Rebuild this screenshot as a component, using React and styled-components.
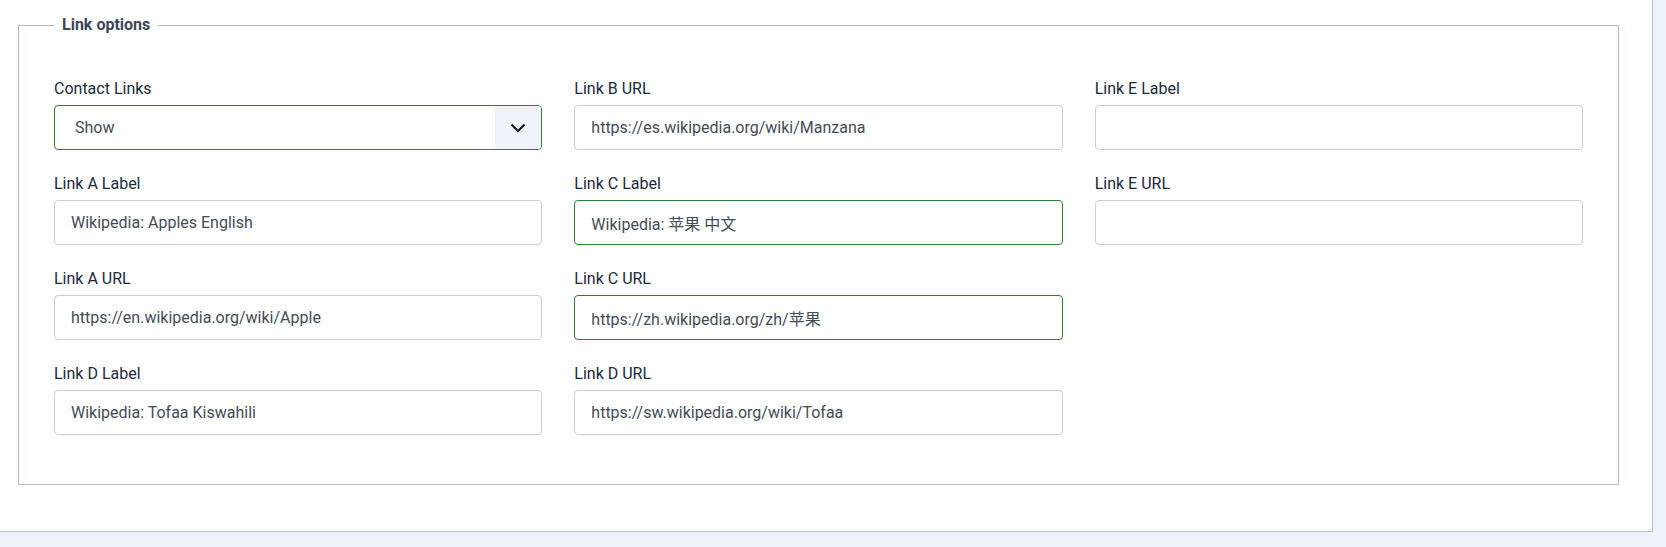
import React from "react";
import styled, { createGlobalStyle } from "styled-components";

const Global = createGlobalStyle`
  html, body {
    margin: 0;
    padding: 0;
    background: #eef2f9;
    font-family: Roboto, "Noto Sans CJK SC", sans-serif;
  }
  * { box-sizing: border-box; }
`;

const Panel = styled.div`
  width: 1653px;
  background: #fff;
  border-right: 1px solid #b4c0cc;
  border-bottom: 1px solid #b4c0cc;
  padding: 13px 33px 46px 18px;
`;

const Fieldset = styled.fieldset`
  margin: 0;
  border: 1px solid #b2bfcc;
  padding: 40px 35px 49px 35px;
  min-width: 0;
`;

const Legend = styled.legend`
  padding: 0 8px;
  font-size: 16px;
  font-weight: 700;
  line-height: 24px;
  color: #3b4654;
`;

const Grid = styled.div`
  display: grid;
  grid-template-columns: repeat(3, 1fr);
  column-gap: 32px;
  align-items: start;
`;

const Column = styled.div`
  display: flex;
  flex-direction: column;
  gap: 22px;
`;

const Field = styled.div`
  display: flex;
  flex-direction: column;
`;

const Label = styled.label`
  font-size: 16px;
  line-height: 24px;
  color: #1c2a3a;
  margin-bottom: 4px;
`;

const Input = styled.input`
  height: 45px;
  width: 100%;
  padding: 0 16px;
  font-family: Roboto, "Noto Sans CJK SC", sans-serif;
  font-size: 16px;
  color: #434c57;
  background: #fff;
  border: 1px solid ${(p) => (p.$valid ? "#2f7d32" : "#cbced2")};
  border-radius: 4px;
  outline: none;
`;

const SelectBox = styled.div`
  height: 45px;
  display: flex;
  align-items: center;
  border: 1px solid #2f7d32;
  border-radius: 4px;
  overflow: hidden;
`;

const SelectValue = styled.div`
  flex: 1;
  padding-left: 20px;
  font-size: 16px;
  color: #434c57;
`;

const Arrow = styled.div`
  width: 46px;
  height: 100%;
  background: #eef3fa;
  display: flex;
  align-items: center;
  justify-content: center;
`;

const fields = [
  [
    { label: "Link A Label", value: "Wikipedia: Apples English" },
    { label: "Link A URL", value: "https://en.wikipedia.org/wiki/Apple" },
    { label: "Link D Label", value: "Wikipedia: Tofaa Kiswahili" },
  ],
  [
    { label: "Link B URL", value: "https://es.wikipedia.org/wiki/Manzana" },
    { label: "Link C Label", value: "Wikipedia: 苹果 中文", valid: true },
    { label: "Link C URL", value: "https://zh.wikipedia.org/zh/苹果", valid: true },
    { label: "Link D URL", value: "https://sw.wikipedia.org/wiki/Tofaa" },
  ],
  [
    { label: "Link E Label", value: "" },
    { label: "Link E URL", value: "" },
  ],
];

function TextField({ label, value, valid }) {
  return (
    <Field>
      <Label>{label}</Label>
      <Input defaultValue={value} $valid={valid} />
    </Field>
  );
}

export default function App() {
  return (
    <>
      <Global />
      <Panel>
        <Fieldset>
          <Legend>Link options</Legend>
          <Grid>
            <Column>
              <Field>
                <Label>Contact Links</Label>
                <SelectBox>
                  <SelectValue>Show</SelectValue>
                  <Arrow>
                    <svg width="16" height="10" viewBox="0 0 16 10">
                      <path d="M1.5 1.5 L8 8 L14.5 1.5" fill="none" stroke="#161616" strokeWidth="2" />
                    </svg>
                  </Arrow>
                </SelectBox>
              </Field>
              {fields[0].map((f) => (
                <TextField key={f.label} {...f} />
              ))}
            </Column>
            <Column>
              {fields[1].map((f) => (
                <TextField key={f.label} {...f} />
              ))}
            </Column>
            <Column>
              {fields[2].map((f) => (
                <TextField key={f.label} {...f} />
              ))}
            </Column>
          </Grid>
        </Fieldset>
      </Panel>
    </>
  );
}
